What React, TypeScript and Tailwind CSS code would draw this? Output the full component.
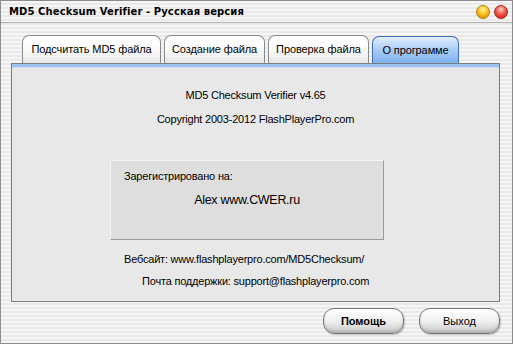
import React from "react";

const stripes = {
  backgroundImage:
    "repeating-linear-gradient(180deg, #f6f6f6 0px, #f6f6f6 2px, #e9e9e9 2px, #e9e9e9 4px)",
};

function Tab({ label, w, active }: { label: string; w: string; active?: boolean }) {
  if (active) {
    return (
      <div
        className={`${w} h-[27px] flex items-center justify-center rounded-t-[7px] border border-b-0 border-[#3f6fb8] bg-gradient-to-b from-[#e3efff] via-[#a9cbf5] to-[#7fb0ee] text-[11px] tracking-[-0.1px] text-black`}
      >
        {label}
      </div>
    );
  }
  return (
    <div
      className={`${w} h-[28px] flex items-center justify-center rounded-t-[7px] border border-b-0 border-[#8a8a8a] bg-gradient-to-b from-[#ffffff] via-[#fbfbfb] to-[#e6e6e6] text-[11px] tracking-[-0.1px] text-black`}
    >
      {label}
    </div>
  );
}

function Btn({ label, bold }: { label: string; bold?: boolean }) {
  return (
    <div className="w-[81px] h-[26px] rounded-[11px] border border-[#7a7a7a] bg-gradient-to-b from-[#ffffff] via-[#f0f0f0] to-[#c9c9c9] shadow-[inset_0_-2px_3px_rgba(0,0,0,0.15),1px_1px_1px_rgba(0,0,0,0.2)] flex items-center justify-center">
      <span className={bold ? "text-[11px] font-bold text-black" : "text-[11px] text-black"}>{label}</span>
    </div>
  );
}

export default function App() {
  return (
    <div
      className="w-[513px] h-[344px] border border-[#8c8c8c] flex flex-col overflow-hidden"
      style={{ ...stripes, fontFamily: '"Liberation Sans", Arial, sans-serif' }}
    >
      <div className="h-[22px] flex items-center justify-between pl-[8px] pr-[4px] border-b border-[#b0b0b0] shrink-0">
        <span className="text-[10px] font-bold text-black tracking-[0.1px]" style={{ fontFamily: '"DejaVu Sans", sans-serif' }}>
          MD5 Checksum Verifier - Русская версия
        </span>
        <div className="flex gap-[4px] items-center">
          <div className="w-[14px] h-[14px] rounded-full border border-[#b07a10] bg-[radial-gradient(circle_at_50%_30%,#fff6b0_0%,#ffc21a_45%,#e07a00_100%)]" />
          <div className="w-[14px] h-[14px] rounded-full border border-[#a02020] bg-[radial-gradient(circle_at_50%_30%,#ffd0c8_0%,#f05a4a_45%,#c01a10_100%)]" />
        </div>
      </div>
      <div className="pl-[10px] pr-[12px] pt-[12px]">
        <div className="flex items-end gap-[3px] pl-[11px]">
          <Tab label="Подсчитать MD5 файла" w="w-[139px]" />
          <Tab label="Создание файла" w="w-[101px]" />
          <Tab label="Проверка файла" w="w-[101px]" />
          <Tab label="О программе" w="w-[87px]" active />
        </div>
        <div className="h-[239px] border border-[#7d7d7d] bg-[#e8e8e8] flex flex-col">
          <div className="h-[4px] bg-[#9fc4f0] border-b border-[#c8dcf5] shrink-0" />
          <div className="flex flex-col items-center text-[11px] leading-[14px] tracking-[-0.2px] text-black">
            <div className="mt-[20px]">MD5 Checksum Verifier v4.65</div>
            <div className="mt-[10px]">Copyright 2003-2012 FlashPlayerPro.com</div>
          </div>
          <div className="mt-[34px] ml-[98px] w-[274px] h-[80px] shrink-0 bg-[#dedede] border border-t-[#f4f4f4] border-l-[#f4f4f4] border-r-[#9a9a9a] border-b-[#9a9a9a] flex flex-col">
            <div className="text-[11px] leading-[14px] tracking-[-0.2px] text-black mt-[8px] ml-[13px]">Зарегистрировано на:</div>
            <div className="text-[12.5px] leading-[15px] tracking-[-0.3px] text-black mt-[10px] text-center">Alex www.CWER.ru</div>
          </div>
          <div className="text-[11px] leading-[14px] tracking-[-0.2px] text-black mt-[12px] ml-[112px]">Вебсайт: www.flashplayerpro.com/MD5Checksum/</div>
          <div className="text-[11px] leading-[14px] tracking-[-0.2px] text-black mt-[8px] ml-[130px]">Почта поддержки: support@flashplayerpro.com</div>
        </div>
        <div className="flex justify-end gap-[15px] mt-[6px]">
          <Btn label="Помощь" bold />
          <Btn label="Выход" />
        </div>
      </div>
    </div>
  );
}
